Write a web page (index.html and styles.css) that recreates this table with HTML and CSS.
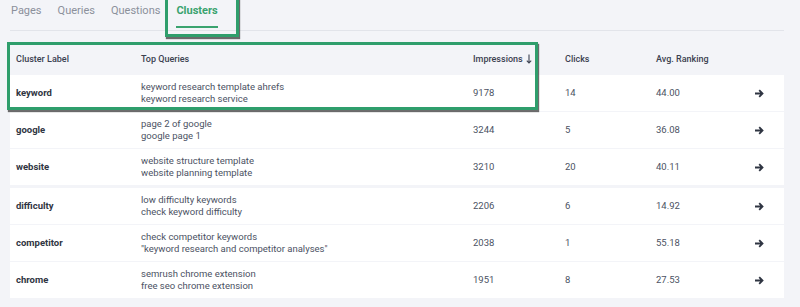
FILE: index.html
```html
<!DOCTYPE html>
<html>
<head>
<meta charset="utf-8">
<link rel="stylesheet" href="styles.css">
</head>
<body>
<div class="page">
  <nav class="tabs">
    <span class="tab">Pages</span>
    <span class="tab">Queries</span>
    <span class="tab">Questions</span>
    <span class="tab active">Clusters<span class="mark mark-tab"></span></span>
  </nav>
  <div class="table">
    <span class="mark mark-row"></span>
    <div class="row head">
      <div>Cluster Label</div>
      <div>Top Queries</div>
      <div class="sort">Impressions <svg class="down" width="6" height="10" viewBox="0 0 6 10"><path d="M3 0.5V9M0.8 6.6L3 9L5.2 6.6" fill="none" stroke="#3b4150" stroke-width="1.1"/></svg></div>
      <div>Clicks</div>
      <div>Avg. Ranking</div>
      <div></div>
    </div>
    <div class="row">
      <div class="label">keyword</div>
      <div class="queries">keyword research template ahrefs<br>keyword research service</div>
      <div>9178</div><div>14</div><div>44.00</div>
      <div class="go"><svg width="10" height="9" viewBox="0 0 10 9"><path d="M1 4.5H8.5M5.2 1.2L8.5 4.5L5.2 7.8" fill="none" stroke="#2f3542" stroke-width="1.8"/></svg></div>
    </div>
    <div class="row">
      <div class="label">google</div>
      <div class="queries">page 2 of google<br>google page 1</div>
      <div>3244</div><div>5</div><div>36.08</div>
      <div class="go"><svg width="10" height="9" viewBox="0 0 10 9"><path d="M1 4.5H8.5M5.2 1.2L8.5 4.5L5.2 7.8" fill="none" stroke="#2f3542" stroke-width="1.8"/></svg></div>
    </div>
    <div class="row split">
      <div class="label">website</div>
      <div class="queries">website structure template<br>website planning template</div>
      <div>3210</div><div>20</div><div>40.11</div>
      <div class="go"><svg width="10" height="9" viewBox="0 0 10 9"><path d="M1 4.5H8.5M5.2 1.2L8.5 4.5L5.2 7.8" fill="none" stroke="#2f3542" stroke-width="1.8"/></svg></div>
    </div>
    <div class="row">
      <div class="label">difficulty</div>
      <div class="queries">low difficulty keywords<br>check keyword difficulty</div>
      <div>2206</div><div>6</div><div>14.92</div>
      <div class="go"><svg width="10" height="9" viewBox="0 0 10 9"><path d="M1 4.5H8.5M5.2 1.2L8.5 4.5L5.2 7.8" fill="none" stroke="#2f3542" stroke-width="1.8"/></svg></div>
    </div>
    <div class="row">
      <div class="label">competitor</div>
      <div class="queries">check competitor keywords<br>"keyword research and competitor analyses"</div>
      <div>2038</div><div>1</div><div>55.18</div>
      <div class="go"><svg width="10" height="9" viewBox="0 0 10 9"><path d="M1 4.5H8.5M5.2 1.2L8.5 4.5L5.2 7.8" fill="none" stroke="#2f3542" stroke-width="1.8"/></svg></div>
    </div>
    <div class="row">
      <div class="label">chrome</div>
      <div class="queries">semrush chrome extension<br>free seo chrome extension</div>
      <div>1951</div><div>8</div><div>27.53</div>
      <div class="go"><svg width="10" height="9" viewBox="0 0 10 9"><path d="M1 4.5H8.5M5.2 1.2L8.5 4.5L5.2 7.8" fill="none" stroke="#2f3542" stroke-width="1.8"/></svg></div>
    </div>
  </div>
</div>
</body>
</html>
```
FILE: styles.css
```css
html, body {
  margin: 0;
  padding: 0;
  background: #f3f4f8;
}
body {
  font-family: Roboto, "Liberation Sans", sans-serif;
  color: #4b5263;
  width: 800px;
  height: 307px;
  overflow: hidden;
}
.page {
  padding: 0 16px 0 10px;
}
.tabs {
  display: flex;
  gap: 16px;
  padding-left: 1px;
  height: 31px;
  border-bottom: 1px solid #e2e4ea;
  box-sizing: border-box;
  position: relative;
}
.tab {
  font-size: 11px;
  line-height: 22px;
  color: #8b909b;
  position: relative;
}
.tab.active {
  color: #3aa36f;
  font-weight: 700;
  border-bottom: 2px solid #3aa36f;
  height: 28px;
  box-sizing: border-box;
  margin-left: 0;
  align-self: flex-start;
  margin-top: 0;
}
.mark {
  position: absolute;
  border: 3px solid #2f9e6c;
  box-shadow: 1px 2px 1px rgba(60, 60, 60, 0.75);
  pointer-events: none;
  z-index: 2;
}
.mark-tab {
  left: -11px;
  right: -21px;
  top: -6px;
  height: 43px;
  box-sizing: border-box;
}
.table {
  margin-top: 14px;
  position: relative;
}
.mark-row {
  left: -3px;
  top: -3px;
  width: 531px;
  height: 68px;
  box-sizing: border-box;
}
.row {
  display: grid;
  grid-template-columns: 125px 332px 92px 91px 1fr 30px;
  align-items: center;
  padding-left: 6px;
  height: 36px;
  background: #fff;
  margin-bottom: 1px;
  font-size: 9.5px;
  line-height: 12px;
}
.row.head {
  background: transparent;
  height: 30px;
  margin-bottom: 0;
  font-size: 9px;
  font-weight: 500;
  color: #3b4150;
  align-items: start;
  padding-top: 8px;
  box-sizing: border-box;
}
.row.split {
  margin-bottom: 3px;
}
.label {
  font-weight: 700;
  color: #2f3542;
}
.sort {
  display: flex;
  align-items: center;
  gap: 3px;
}
.down {
  display: block;
}
.go {
  display: flex;
  align-items: center;
}
.go svg {
  display: block;
}
```
